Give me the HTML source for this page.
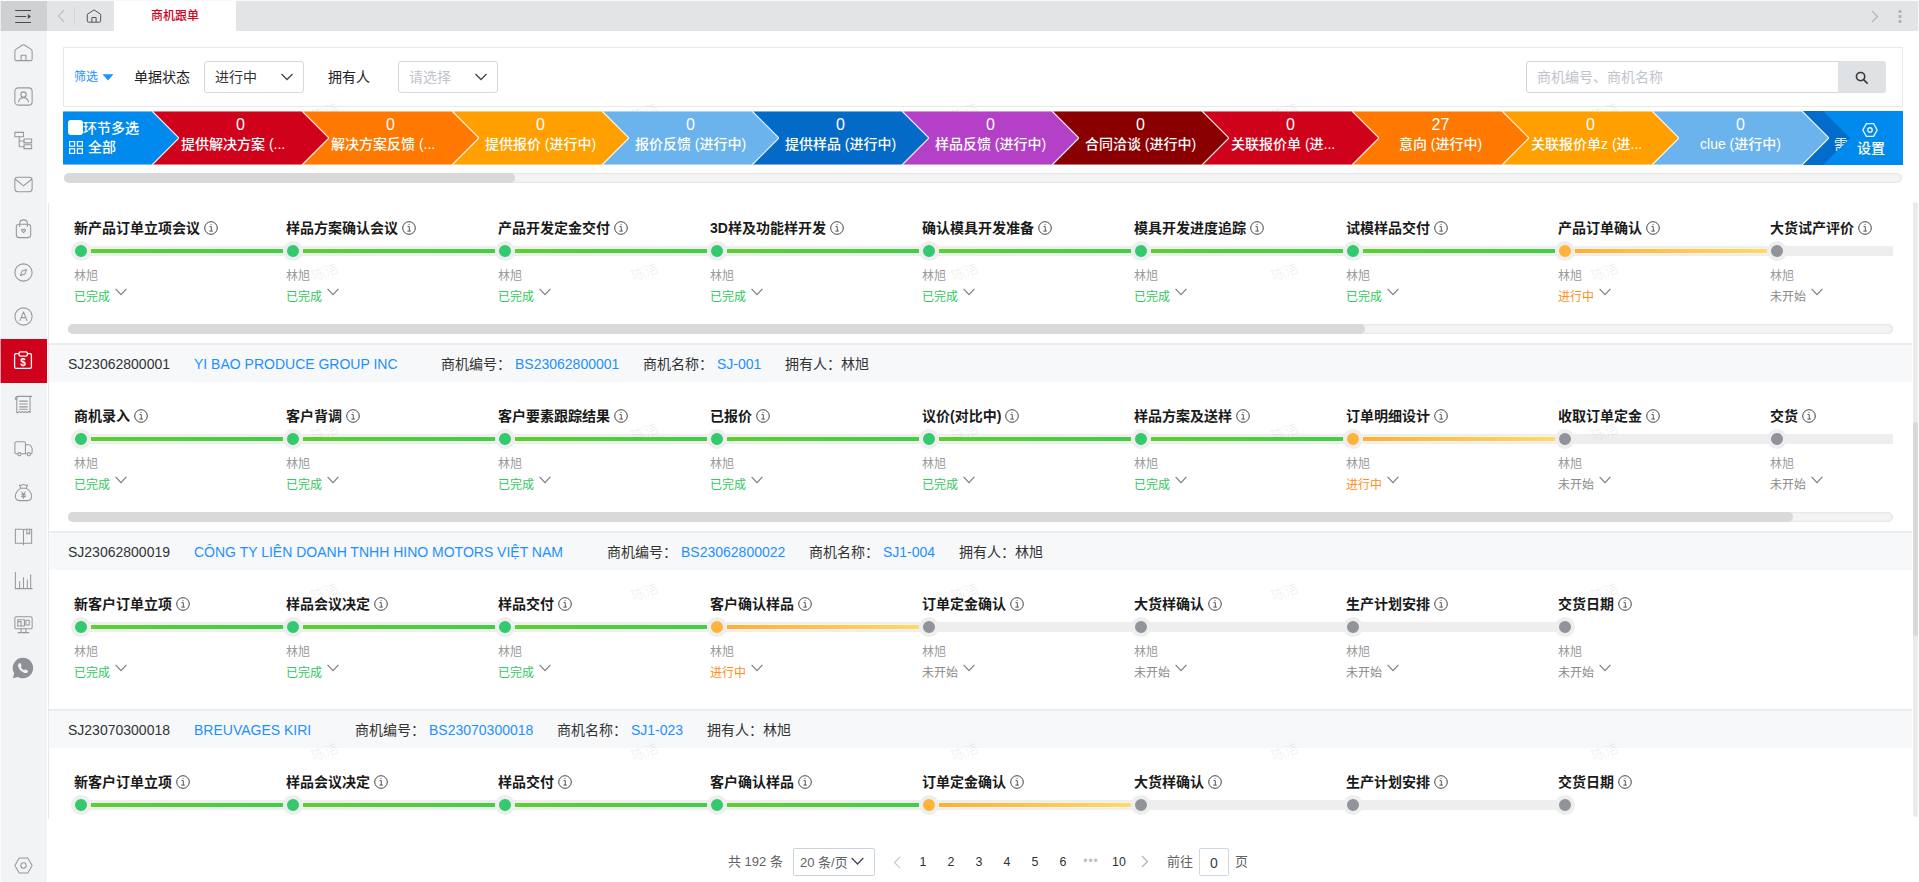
<!DOCTYPE html><html lang="zh-CN"><head><meta charset="utf-8"><title>商机跟单</title><style>
*{box-sizing:border-box;margin:0;padding:0}
html,body{width:1919px;height:882px;overflow:hidden;background:#fff}
body{font-family:"Liberation Sans","Noto Sans CJK SC",sans-serif;font-size:14px;color:#333;position:relative}
.abs{position:absolute}
#topbar{position:absolute;left:0;top:0;width:1919px;height:31px;background:#e3e4e6}
#ham{position:absolute;left:0;top:0;width:47px;height:31px;background:#cfd0d2}
#tab{position:absolute;left:114px;top:1px;width:122px;height:30px;background:#fff;color:#d0021b;font-size:12px;line-height:30px;text-align:center;font-weight:500}
#side{position:absolute;left:0;top:31px;width:47px;height:851px;background:#f2f3f5}
.sic{position:absolute;left:0;width:47px;height:44px}
.sic svg{position:absolute;left:11.500px;top:10.500px;width:23px;height:23px;overflow:visible}
.sic.on{background:#d0021b}
#filter{position:absolute;left:63px;top:47px;width:1840px;height:60px;border:1px solid #e9e9eb;background:#fff}
.sel{position:absolute;height:32px;border:1px solid #d6d8dd;border-radius:3px;background:#fff;font-size:14px;line-height:30px;padding-left:10px;color:#333}
.sel svg{position:absolute;right:9px;top:8px}
#pipe{position:absolute;left:63px;top:111px;width:1840px;height:54px;overflow:hidden;background:#018aed;border-radius:2px 0 0 2px}
.seg{position:absolute;top:0;height:54px;width:177px;color:#fff;text-align:center;font-weight:500}
.seg svg{position:absolute;left:0;top:0}
.seg .n{position:absolute;left:0;width:177px;top:5px;font-size:16px;line-height:18px}
.seg .t{position:absolute;left:0;width:177px;top:23px;font-size:14px;line-height:20px;white-space:nowrap}
.hsb{position:absolute;height:10px;border-radius:5px;background:#f4f4f4;box-shadow:inset 0 0 3px rgba(0,0,0,.12)}
.hsb i{position:absolute;left:0;top:0;height:10px;border-radius:5px;background:#d9d9d9}
#panel{position:absolute;left:49px;top:200px;width:1863px;height:619px;overflow:hidden}
.hdr{position:absolute;left:0;width:1864px;height:39px;border-top:2px solid #ebecef;background:#f7f8fa;font-size:14px;line-height:39px;white-space:nowrap;color:#333}
.hdr span{position:absolute;top:0}
.hdr a{color:#1e90ff;text-decoration:none}
.step{position:absolute;width:212px;height:90px}
.step .lb{position:absolute;left:0;top:0;font-size:14px;font-weight:bold;color:#1a1a1a;line-height:20px;white-space:nowrap}
.step .lb svg{vertical-align:-2px;margin-left:4px}
.step .trk{position:absolute;left:7px;top:28px;width:212px;height:10px;background:#eee}
.step .bar{position:absolute;left:17px;top:31px;width:192px;height:4px;box-shadow:0 0 0 1px rgba(255,250,255,.55)}
.step .dot{position:absolute;left:-3px;top:23px;width:20px;height:20px;border-radius:10px;border:4px solid #eee}
.g .dot{background:#33c96d}.g .bar{background:linear-gradient(90deg,#5ad12c,#3dd142)}
.o .dot{background:#ffb339}.o .bar{background:linear-gradient(90deg,#ffb02e,#ffda62)}
.n .dot{background:#909399}.n .bar{display:none}
.step .nm{position:absolute;left:0;top:50px;font-size:12px;line-height:16px;color:#999}
.step .st{position:absolute;left:0;top:71px;font-size:12px;line-height:16px;white-space:nowrap}
.g .st{color:#33c862}.o .st{color:#ff8e20}.n .st{color:#8a8a8a}
.step .st svg{position:absolute;left:41px;top:-1px}
#pg{position:absolute;left:0;top:848px;width:1919px;height:28px;font-size:13px;color:#606266;line-height:28px}
#pg span{position:absolute;top:0;white-space:nowrap}
#pg .num{color:#303133;width:28px;text-align:center;font-size:13.500px;transform:scaleX(.92)}
.wm{position:absolute;font-size:14px;line-height:20px;color:rgba(0,0,0,.075);transform:rotate(-20deg);white-space:nowrap;pointer-events:none}
</style></head><body>
<div id="topbar"><div id="ham"><svg class="abs" style="left:15px;top:9px" width="17" height="15" viewBox="0 0 17 15" fill="none" stroke="#4a4a4e" stroke-width="1.1"><path d="M0.200 1.500H16M0.200 7.500H11.200M0.200 13.500H16"/><path d="M12.800 5L16 7.500L12.800 10Z" fill="#4a4a4e" stroke="none"/></svg></div>
<svg class="abs" style="left:57px;top:9px" width="8" height="14" viewBox="0 0 8 14" fill="none" stroke="#bfc1c4" stroke-width="1.2"><path d="M7 1L1.5 7L7 13"/></svg>
<div class="abs" style="left:74px;top:7px;width:1px;height:18px;background:#d4d5d7"></div>
<svg class="abs" style="left:86px;top:9px" width="16" height="14" viewBox="0 0 16 14" fill="none" stroke="#55555a" stroke-width="1" stroke-linejoin="round"><path d="M1.300 11.800V5.300L8 .9L14.700 5.300V11.800Q14.700 13.200 13.300 13.200H2.700Q1.300 13.200 1.300 11.800Z"/><path d="M5.900 13V8.500H10.100V13"/></svg>
<div id="tab">商机跟单</div>
<svg class="abs" style="left:1871px;top:10px" width="8" height="13" viewBox="0 0 8 13" fill="none" stroke="#b4b6ba" stroke-width="1.2"><path d="M1 1L6.5 6.5L1 12"/></svg>
<svg class="abs" style="left:1898px;top:10px" width="4" height="14" viewBox="0 0 4 14" fill="#b0b1b5"><rect x=".5" y="0" width="3" height="3" rx="1"/><rect x=".5" y="5" width="3" height="3" rx="1"/><rect x=".5" y="10" width="3" height="3" rx="1"/></svg>
</div>
<div id="side">
<div class="sic" style="top:-1px"><svg viewBox="0 0 24 24" stroke="#96989d" stroke-width="1.1" fill="none" stroke-linecap="round" stroke-linejoin="round"><path d="M3 19V10.600Q3 9.400 4 8.700L11 4.200Q12 3.600 13 4.200L20 8.700Q21 9.400 21 10.600V19Q21 20.500 19.500 20.500H4.500Q3 20.500 3 19Z"/><path d="M9.500 20.300V14.800H14.500V20.300"/></svg></div>
<div class="sic" style="top:43px"><svg viewBox="0 0 24 24" stroke="#96989d" stroke-width="1.1" fill="none" stroke-linecap="round" stroke-linejoin="round"><rect x="3" y="3" width="18" height="18" rx="3.5"/><circle cx="12" cy="10" r="2.8"/><path d="M6.8 17.5Q8 13.2 12 13.2Q16 13.2 17.2 17.5"/></svg></div>
<div class="sic" style="top:87px"><svg viewBox="0 0 24 24" stroke="#96989d" stroke-width="1.1" fill="none" stroke-linecap="round" stroke-linejoin="round"><rect x="3" y="3.5" width="9" height="4.5"/><path d="M7.5 8V18.5H12.5M7.5 12.5H12.5"/><rect x="12.5" y="10.5" width="8" height="4"/><rect x="12.5" y="16.5" width="8" height="4"/></svg></div>
<div class="sic" style="top:131px"><svg viewBox="0 0 24 24" stroke="#96989d" stroke-width="1.1" fill="none" stroke-linecap="round" stroke-linejoin="round"><rect x="3" y="4.5" width="18" height="15" rx="3"/><path d="M3.5 6.5L12 13.5L20.5 6.5"/></svg></div>
<div class="sic" style="top:175px"><svg viewBox="0 0 24 24" stroke="#96989d" stroke-width="1.1" fill="none" stroke-linecap="round" stroke-linejoin="round"><rect x="4.5" y="7.5" width="15" height="14" rx="3"/><path d="M8 10V6.5Q8 3 12 3Q16 3 16 6.5V10"/><path d="M12 16.3L10.2 14.4Q9.6 13.2 10.8 12.9Q11.6 12.8 12 13.6Q12.4 12.8 13.2 12.9Q14.4 13.2 13.8 14.4Z"/></svg></div>
<div class="sic" style="top:219px"><svg viewBox="0 0 24 24" stroke="#96989d" stroke-width="1.1" fill="none" stroke-linecap="round" stroke-linejoin="round"><circle cx="12" cy="12" r="9"/><path d="M15.2 8.8L13.5 13.5L8.8 15.2L10.5 10.5Z"/></svg></div>
<div class="sic" style="top:263px"><svg viewBox="0 0 24 24" stroke="#96989d" stroke-width="1.1" fill="none" stroke-linecap="round" stroke-linejoin="round"><circle cx="12" cy="12" r="9"/><path d="M8.3 16.3L12 7.2L15.7 16.3M9.6 13.2H14.4"/></svg></div>
<div class="abs" style="left:0;top:308px;width:47px;height:44px;background:#d0021b"><svg class="abs" style="left:0;top:0" width="47" height="44" viewBox="0 0 47 44" stroke="#fff" stroke-width="1.3" fill="none"><rect x="14.600" y="14.700" width="16.800" height="14.600" rx="1.400"/><rect x="19" y="12.800" width="8.400" height="4.400" rx="1.600" fill="#d0021b"/><text x="23.100" y="26.600" font-size="10" font-weight="bold" fill="#fff" stroke="none" text-anchor="middle" font-family="Liberation Sans,sans-serif">$</text></svg></div>
<div class="sic" style="top:351px"><svg viewBox="0 0 24 24" stroke="#96989d" stroke-width="1.1" fill="none" stroke-linecap="round" stroke-linejoin="round"><path d="M5 20.5V5.5Q5 3.5 7 3.5H20.5Q18.8 3.5 18.8 5.5V20.5L17.2 19.3L15.6 20.5L14 19.3L12.4 20.5L10.8 19.3L9.2 20.5L7.6 19.3L6 20.5Z"/><path d="M3.5 6.5Q3.5 3.5 7 3.5M3.5 6.5H5M8 8.5H16M8 11.5H16M8 14.5H16M8 17H16"/></svg></div>
<div class="sic" style="top:395px"><svg viewBox="0 0 24 24" stroke="#96989d" stroke-width="1.1" fill="none" stroke-linecap="round" stroke-linejoin="round"><path d="M6 17.5H4.5Q3 17.5 3 16V6.5Q3 5 4.5 5H12.5Q14 5 14 6.5V17.5H9.5"/><path d="M14 8H17.5Q19 8 19.8 9.5L21 12V16Q21 17.5 19.5 17.5H19.3M14 17.5H16"/><circle cx="7.7" cy="18" r="1.7"/><circle cx="17.6" cy="18" r="1.7"/></svg></div>
<div class="sic" style="top:439px"><svg viewBox="0 0 24 24" stroke="#96989d" stroke-width="1.1" fill="none" stroke-linecap="round" stroke-linejoin="round"><path d="M9.2 7.5Q3.5 11.5 3.5 16Q3.5 20.5 8 20.5H16Q20.500 20.5 20.5 16Q20.5 11.5 14.8 7.5Z"/><path d="M9.2 7.5L7.8 4.2Q10 5 12 3.5Q14 5 16.2 4.2L14.8 7.5"/><path d="M10 11.5L12 14L14 11.5M12 14V18M10 14.5H14M10 16.3H14"/></svg></div>
<div class="sic" style="top:483px"><svg viewBox="0 0 24 24" stroke="#96989d" stroke-width="1.1" fill="none" stroke-linecap="round" stroke-linejoin="round"><path d="M12 6Q12 4.5 10.5 4.5H3.5V19H10.5Q12 19 12 20.5Q12 19 13.5 19H20.5V4.5H13.5Q12 4.500 12 6ZM12 6V20"/><path d="M15.5 4.5V9.500L17 8.5L18.500 9.5V4.5"/></svg></div>
<div class="sic" style="top:527px"><svg viewBox="0 0 24 24" stroke="#96989d" stroke-width="1.1" fill="none" stroke-linecap="round" stroke-linejoin="round"><path d="M3.5 3.5V20.5H21M8 20V13M12 20V9M16 20V11.500M19.500 20V6"/></svg></div>
<div class="sic" style="top:571px"><svg viewBox="0 0 24 24" stroke="#96989d" stroke-width="1.1" fill="none" stroke-linecap="round" stroke-linejoin="round"><rect x="3" y="4" width="18" height="12.500" rx="1.5"/><path d="M9.5 16.5V20.5M14.5 16.5V20.5M6.5 20.5H17.5M6 7H13V13.500H6ZM6 9H9.5V13.5M14.500 7.5H18V12.500H14.500Z"/></svg></div>
<div class="sic" style="top:615px"><svg style="left:11px;top:10px;width:24px;height:24px" viewBox="0 0 24 24"><path d="M12 1.800A10.200 10.200 0 0 0 3.200 17.200L1.800 22.200L7 20.900A10.200 10.200 0 1 0 12 1.800Z" fill="#8e9096"/><path d="M8.200 7.200Q9 6.600 9.500 7.400L10.500 9.200Q10.800 9.900 10.200 10.500L9.700 11Q10.800 13.200 13 14.300L13.600 13.700Q14.200 13.200 14.900 13.600L16.600 14.600Q17.300 15.100 16.800 15.900Q15.500 17.600 13.500 16.900Q8.800 15.100 7.100 10.500Q6.600 8.400 8.200 7.200Z" fill="#f2f3f5"/></svg></div>
<div class="sic" style="top:812px"><svg viewBox="0 0 24 24" stroke="#96989d" stroke-width="1.1" fill="none" stroke-linecap="round" stroke-linejoin="round"><path d="M7.500 4.200H16.500L21 12L16.500 19.800H7.500L3 12Z"/><circle cx="12" cy="12" r="2.800"/></svg></div>
</div>
<div id="filter">
<span class="abs" style="left:10px;top:19px;font-size:12px;line-height:20px;color:#1e90ff">筛选</span>
<svg class="abs" style="left:38px;top:26px" width="12" height="7" viewBox="0 0 12 7"><path d="M.5 .3H11.500L6 6.600Z" fill="#1e90ff"/></svg>
<span class="abs" style="left:70px;top:19px;font-size:14px;line-height:20px;color:#222">单据状态</span>
<div class="sel" style="left:140px;top:13px;width:100px">进行中<svg width="14" height="14" viewBox="0 0 14 14" fill="none" stroke="#444" stroke-width="1.3"><path d="M1.500 4L7 9.500L12.500 4"/></svg></div>
<span class="abs" style="left:264px;top:19px;font-size:14px;line-height:20px;color:#222">拥有人</span>
<div class="sel" style="left:334px;top:13px;width:100px;color:#c0c4cc">请选择<svg width="14" height="14" viewBox="0 0 14 14" fill="none" stroke="#444" stroke-width="1.3"><path d="M1.500 4L7 9.500L12.500 4"/></svg></div>
<div class="abs" style="left:1462px;top:13px;width:313px;height:32px;border:1px solid #d3d6da;border-radius:3px 0 0 3px;font-size:14px;line-height:30px;padding-left:10px;color:#c0c4cc">商机编号、商机名称</div>
<div class="abs" style="left:1774px;top:13px;width:48px;height:32px;background:#dfe2e5;border-radius:0 3px 3px 0"><svg class="abs" style="left:17px;top:9.500px" width="13.500" height="13.500" viewBox="0 0 15 15" fill="none" stroke="#3a3a3a" stroke-width="1.800"><circle cx="6.200" cy="6.200" r="4.600"/><path d="M9.600 9.600L13.500 13.500" stroke-linecap="round"/></svg></div>
</div>
<div id="pipe">
<div class="seg" style="left:-61px;text-align:left;z-index:40"><svg width="177" height="54" viewBox="0 0 177 54"><path d="M-30 0H150L177 27L150 54H-30Z" fill="#018aed" stroke="rgba(255,255,255,.9)" stroke-width="1.2"/></svg><div class="abs" style="left:66px;top:9px;width:15px;height:15px;background:#fff;border-radius:3px"></div><span class="abs" style="left:81px;top:7px;font-size:14px;line-height:20px;white-space:nowrap">环节多选</span><svg class="abs" style="left:66.500px;top:29.500px;width:14px;height:13px" width="14" height="13" viewBox="0 0 14 13" fill="none" stroke="#fff" stroke-width="1.200"><rect x=".6" y=".6" width="5" height="4.600"/><rect x="8.400" y=".6" width="5" height="4.600"/><rect x=".6" y="7.800" width="5" height="4.600"/><rect x="8.400" y="7.800" width="5" height="4.600"/></svg><span class="abs" style="left:86px;top:26px;font-size:14px;line-height:20px;white-space:nowrap">全部</span></div>
<div class="seg" style="left:89px;z-index:30"><svg width="177" height="54" viewBox="0 0 177 54"><path d="M-30 0H150L177 27L150 54H-30Z" fill="#d0021b" stroke="rgba(255,255,255,.9)" stroke-width="1.2"/></svg><div class="n">0</div><div class="t" style="text-align:left;left:29px">提供解决方案 (...</div></div>
<div class="seg" style="left:239px;z-index:29"><svg width="177" height="54" viewBox="0 0 177 54"><path d="M-30 0H150L177 27L150 54H-30Z" fill="#ff7800" stroke="rgba(255,255,255,.9)" stroke-width="1.2"/></svg><div class="n">0</div><div class="t" style="text-align:left;left:29px">解决方案反馈 (...</div></div>
<div class="seg" style="left:389px;z-index:28"><svg width="177" height="54" viewBox="0 0 177 54"><path d="M-30 0H150L177 27L150 54H-30Z" fill="#ffa000" stroke="rgba(255,255,255,.9)" stroke-width="1.2"/></svg><div class="n">0</div><div class="t">提供报价 (进行中)</div></div>
<div class="seg" style="left:539px;z-index:27"><svg width="177" height="54" viewBox="0 0 177 54"><path d="M-30 0H150L177 27L150 54H-30Z" fill="#6ab3ec" stroke="rgba(255,255,255,.9)" stroke-width="1.2"/></svg><div class="n">0</div><div class="t">报价反馈 (进行中)</div></div>
<div class="seg" style="left:689px;z-index:26"><svg width="177" height="54" viewBox="0 0 177 54"><path d="M-30 0H150L177 27L150 54H-30Z" fill="#046ac8" stroke="rgba(255,255,255,.9)" stroke-width="1.2"/></svg><div class="n">0</div><div class="t">提供样品 (进行中)</div></div>
<div class="seg" style="left:839px;z-index:25"><svg width="177" height="54" viewBox="0 0 177 54"><path d="M-30 0H150L177 27L150 54H-30Z" fill="#b540c8" stroke="rgba(255,255,255,.9)" stroke-width="1.2"/></svg><div class="n">0</div><div class="t">样品反馈 (进行中)</div></div>
<div class="seg" style="left:989px;z-index:24"><svg width="177" height="54" viewBox="0 0 177 54"><path d="M-30 0H150L177 27L150 54H-30Z" fill="#8a0000" stroke="rgba(255,255,255,.9)" stroke-width="1.2"/></svg><div class="n">0</div><div class="t">合同洽谈 (进行中)</div></div>
<div class="seg" style="left:1139px;z-index:23"><svg width="177" height="54" viewBox="0 0 177 54"><path d="M-30 0H150L177 27L150 54H-30Z" fill="#d0021b" stroke="rgba(255,255,255,.9)" stroke-width="1.2"/></svg><div class="n">0</div><div class="t" style="text-align:left;left:29px">关联报价单 (进...</div></div>
<div class="seg" style="left:1289px;z-index:22"><svg width="177" height="54" viewBox="0 0 177 54"><path d="M-30 0H150L177 27L150 54H-30Z" fill="#ff7800" stroke="rgba(255,255,255,.9)" stroke-width="1.2"/></svg><div class="n">27</div><div class="t">意向 (进行中)</div></div>
<div class="seg" style="left:1439px;z-index:21"><svg width="177" height="54" viewBox="0 0 177 54"><path d="M-30 0H150L177 27L150 54H-30Z" fill="#ffa000" stroke="rgba(255,255,255,.9)" stroke-width="1.2"/></svg><div class="n">0</div><div class="t" style="text-align:left;left:29px">关联报价单z (进...</div></div>
<div class="seg" style="left:1589px;z-index:20"><svg width="177" height="54" viewBox="0 0 177 54"><path d="M-30 0H150L177 27L150 54H-30Z" fill="#6ab3ec" stroke="rgba(255,255,255,.9)" stroke-width="1.2"/></svg><div class="n">0</div><div class="t">clue (进行中)</div></div>
<div class="abs" style="left:1739px;top:0;width:101px;height:54px;background:#018aed"></div>
<svg class="abs" style="left:1739px;top:0" width="48" height="54" viewBox="0 0 48 54"><path d="M0 0H21L48 27L21 54H0Z" fill="#036bc9"/></svg>
<div class="abs" style="left:1771px;top:24px;width:16px;height:16px;overflow:hidden;color:#fff;font-size:14px;line-height:20px;clip-path:polygon(0 0,100% 0,100% 20%,20% 100%,0 100%)">需</div>
<svg class="abs" style="left:1799px;top:11px" width="16" height="16" viewBox="0 0 16 16" fill="none" stroke="#e4f2fd" stroke-width="1.400" stroke-linejoin="round"><path d="M4.400 1.600H11.600L15.200 8L11.600 14.400H4.400L.8 8Z"/><circle cx="8" cy="8" r="2.200"/></svg>
<span class="abs" style="left:1794px;top:27px;font-size:14px;line-height:20px;color:#fff;font-weight:500">设置</span>
</div>
<div class="hsb" style="left:64px;top:173px;width:1838px"><i style="width:451px"></i></div>
<div class="abs" style="left:48px;top:203px;width:1px;height:616px;background:#e8e9ec"></div>
<div id="panel">
<div class="abs" style="left:19px;top:14px;width:1825px;height:100px;overflow:hidden">
<div class="step g" style="left:6px;top:4px"><div class="trk"></div><div class="bar"></div><div class="dot"></div><div class="lb">新产品订单立项会议<svg width="14" height="14" viewBox="0 0 14 14" fill="none" stroke="#444" stroke-width="1"><circle cx="7" cy="7" r="6.300"/><path d="M5.500 5.600H7.300V10M5.300 10.100H8.900" stroke-width=".9"/><circle cx="7" cy="3.500" r=".55" fill="#444" stroke="none"/></svg></div><div class="nm">林旭</div><div class="st">已完成<svg width="12" height="8" viewBox="0 0 12 8" fill="none" stroke="#7c7c86" stroke-width="1.200"><path d="M.6 .8L6 6.600L11.400 .8"/></svg></div></div>
<div class="step g" style="left:218px;top:4px"><div class="trk"></div><div class="bar"></div><div class="dot"></div><div class="lb">样品方案确认会议<svg width="14" height="14" viewBox="0 0 14 14" fill="none" stroke="#444" stroke-width="1"><circle cx="7" cy="7" r="6.300"/><path d="M5.500 5.600H7.300V10M5.300 10.100H8.900" stroke-width=".9"/><circle cx="7" cy="3.500" r=".55" fill="#444" stroke="none"/></svg></div><div class="nm">林旭</div><div class="st">已完成<svg width="12" height="8" viewBox="0 0 12 8" fill="none" stroke="#7c7c86" stroke-width="1.200"><path d="M.6 .8L6 6.600L11.400 .8"/></svg></div></div>
<div class="step g" style="left:430px;top:4px"><div class="trk"></div><div class="bar"></div><div class="dot"></div><div class="lb">产品开发定金交付<svg width="14" height="14" viewBox="0 0 14 14" fill="none" stroke="#444" stroke-width="1"><circle cx="7" cy="7" r="6.300"/><path d="M5.500 5.600H7.300V10M5.300 10.100H8.900" stroke-width=".9"/><circle cx="7" cy="3.500" r=".55" fill="#444" stroke="none"/></svg></div><div class="nm">林旭</div><div class="st">已完成<svg width="12" height="8" viewBox="0 0 12 8" fill="none" stroke="#7c7c86" stroke-width="1.200"><path d="M.6 .8L6 6.600L11.400 .8"/></svg></div></div>
<div class="step g" style="left:642px;top:4px"><div class="trk"></div><div class="bar"></div><div class="dot"></div><div class="lb">3D样及功能样开发<svg width="14" height="14" viewBox="0 0 14 14" fill="none" stroke="#444" stroke-width="1"><circle cx="7" cy="7" r="6.300"/><path d="M5.500 5.600H7.300V10M5.300 10.100H8.900" stroke-width=".9"/><circle cx="7" cy="3.500" r=".55" fill="#444" stroke="none"/></svg></div><div class="nm">林旭</div><div class="st">已完成<svg width="12" height="8" viewBox="0 0 12 8" fill="none" stroke="#7c7c86" stroke-width="1.200"><path d="M.6 .8L6 6.600L11.400 .8"/></svg></div></div>
<div class="step g" style="left:854px;top:4px"><div class="trk"></div><div class="bar"></div><div class="dot"></div><div class="lb">确认模具开发准备<svg width="14" height="14" viewBox="0 0 14 14" fill="none" stroke="#444" stroke-width="1"><circle cx="7" cy="7" r="6.300"/><path d="M5.500 5.600H7.300V10M5.300 10.100H8.900" stroke-width=".9"/><circle cx="7" cy="3.500" r=".55" fill="#444" stroke="none"/></svg></div><div class="nm">林旭</div><div class="st">已完成<svg width="12" height="8" viewBox="0 0 12 8" fill="none" stroke="#7c7c86" stroke-width="1.200"><path d="M.6 .8L6 6.600L11.400 .8"/></svg></div></div>
<div class="step g" style="left:1066px;top:4px"><div class="trk"></div><div class="bar"></div><div class="dot"></div><div class="lb">模具开发进度追踪<svg width="14" height="14" viewBox="0 0 14 14" fill="none" stroke="#444" stroke-width="1"><circle cx="7" cy="7" r="6.300"/><path d="M5.500 5.600H7.300V10M5.300 10.100H8.900" stroke-width=".9"/><circle cx="7" cy="3.500" r=".55" fill="#444" stroke="none"/></svg></div><div class="nm">林旭</div><div class="st">已完成<svg width="12" height="8" viewBox="0 0 12 8" fill="none" stroke="#7c7c86" stroke-width="1.200"><path d="M.6 .8L6 6.600L11.400 .8"/></svg></div></div>
<div class="step g" style="left:1278px;top:4px"><div class="trk"></div><div class="bar"></div><div class="dot"></div><div class="lb">试模样品交付<svg width="14" height="14" viewBox="0 0 14 14" fill="none" stroke="#444" stroke-width="1"><circle cx="7" cy="7" r="6.300"/><path d="M5.500 5.600H7.300V10M5.300 10.100H8.900" stroke-width=".9"/><circle cx="7" cy="3.500" r=".55" fill="#444" stroke="none"/></svg></div><div class="nm">林旭</div><div class="st">已完成<svg width="12" height="8" viewBox="0 0 12 8" fill="none" stroke="#7c7c86" stroke-width="1.200"><path d="M.6 .8L6 6.600L11.400 .8"/></svg></div></div>
<div class="step o" style="left:1490px;top:4px"><div class="trk"></div><div class="bar"></div><div class="dot"></div><div class="lb">产品订单确认<svg width="14" height="14" viewBox="0 0 14 14" fill="none" stroke="#444" stroke-width="1"><circle cx="7" cy="7" r="6.300"/><path d="M5.500 5.600H7.300V10M5.300 10.100H8.900" stroke-width=".9"/><circle cx="7" cy="3.500" r=".55" fill="#444" stroke="none"/></svg></div><div class="nm">林旭</div><div class="st">进行中<svg width="12" height="8" viewBox="0 0 12 8" fill="none" stroke="#7c7c86" stroke-width="1.200"><path d="M.6 .8L6 6.600L11.400 .8"/></svg></div></div>
<div class="step n" style="left:1702px;top:4px"><div class="trk"></div><div class="bar"></div><div class="dot"></div><div class="lb">大货试产评价<svg width="14" height="14" viewBox="0 0 14 14" fill="none" stroke="#444" stroke-width="1"><circle cx="7" cy="7" r="6.300"/><path d="M5.500 5.600H7.300V10M5.300 10.100H8.900" stroke-width=".9"/><circle cx="7" cy="3.500" r=".55" fill="#444" stroke="none"/></svg></div><div class="nm">林旭</div><div class="st">未开始<svg width="12" height="8" viewBox="0 0 12 8" fill="none" stroke="#7c7c86" stroke-width="1.200"><path d="M.6 .8L6 6.600L11.400 .8"/></svg></div></div>
</div>
<div class="hsb" style="left:19px;top:124px;width:1825px"><i style="width:1297px"></i></div>
<div class="hdr" style="top:143px"><span style="left:19px">SJ23062800001</span><span style="left:145px"><a>YI BAO PRODUCE GROUP INC</a></span><span style="left:392px">商机编号：</span><span style="left:466px"><a>BS23062800001</a></span><span style="left:594px">商机名称：</span><span style="left:668px"><a>SJ-001</a></span><span style="left:736px">拥有人：林旭</span></div>
<div class="abs" style="left:19px;top:202px;width:1825px;height:100px;overflow:hidden">
<div class="step g" style="left:6px;top:4px"><div class="trk"></div><div class="bar"></div><div class="dot"></div><div class="lb">商机录入<svg width="14" height="14" viewBox="0 0 14 14" fill="none" stroke="#444" stroke-width="1"><circle cx="7" cy="7" r="6.300"/><path d="M5.500 5.600H7.300V10M5.300 10.100H8.900" stroke-width=".9"/><circle cx="7" cy="3.500" r=".55" fill="#444" stroke="none"/></svg></div><div class="nm">林旭</div><div class="st">已完成<svg width="12" height="8" viewBox="0 0 12 8" fill="none" stroke="#7c7c86" stroke-width="1.200"><path d="M.6 .8L6 6.600L11.400 .8"/></svg></div></div>
<div class="step g" style="left:218px;top:4px"><div class="trk"></div><div class="bar"></div><div class="dot"></div><div class="lb">客户背调<svg width="14" height="14" viewBox="0 0 14 14" fill="none" stroke="#444" stroke-width="1"><circle cx="7" cy="7" r="6.300"/><path d="M5.500 5.600H7.300V10M5.300 10.100H8.900" stroke-width=".9"/><circle cx="7" cy="3.500" r=".55" fill="#444" stroke="none"/></svg></div><div class="nm">林旭</div><div class="st">已完成<svg width="12" height="8" viewBox="0 0 12 8" fill="none" stroke="#7c7c86" stroke-width="1.200"><path d="M.6 .8L6 6.600L11.400 .8"/></svg></div></div>
<div class="step g" style="left:430px;top:4px"><div class="trk"></div><div class="bar"></div><div class="dot"></div><div class="lb">客户要素跟踪结果<svg width="14" height="14" viewBox="0 0 14 14" fill="none" stroke="#444" stroke-width="1"><circle cx="7" cy="7" r="6.300"/><path d="M5.500 5.600H7.300V10M5.300 10.100H8.900" stroke-width=".9"/><circle cx="7" cy="3.500" r=".55" fill="#444" stroke="none"/></svg></div><div class="nm">林旭</div><div class="st">已完成<svg width="12" height="8" viewBox="0 0 12 8" fill="none" stroke="#7c7c86" stroke-width="1.200"><path d="M.6 .8L6 6.600L11.400 .8"/></svg></div></div>
<div class="step g" style="left:642px;top:4px"><div class="trk"></div><div class="bar"></div><div class="dot"></div><div class="lb">已报价<svg width="14" height="14" viewBox="0 0 14 14" fill="none" stroke="#444" stroke-width="1"><circle cx="7" cy="7" r="6.300"/><path d="M5.500 5.600H7.300V10M5.300 10.100H8.900" stroke-width=".9"/><circle cx="7" cy="3.500" r=".55" fill="#444" stroke="none"/></svg></div><div class="nm">林旭</div><div class="st">已完成<svg width="12" height="8" viewBox="0 0 12 8" fill="none" stroke="#7c7c86" stroke-width="1.200"><path d="M.6 .8L6 6.600L11.400 .8"/></svg></div></div>
<div class="step g" style="left:854px;top:4px"><div class="trk"></div><div class="bar"></div><div class="dot"></div><div class="lb">议价(对比中)<svg width="14" height="14" viewBox="0 0 14 14" fill="none" stroke="#444" stroke-width="1"><circle cx="7" cy="7" r="6.300"/><path d="M5.500 5.600H7.300V10M5.300 10.100H8.900" stroke-width=".9"/><circle cx="7" cy="3.500" r=".55" fill="#444" stroke="none"/></svg></div><div class="nm">林旭</div><div class="st">已完成<svg width="12" height="8" viewBox="0 0 12 8" fill="none" stroke="#7c7c86" stroke-width="1.200"><path d="M.6 .8L6 6.600L11.400 .8"/></svg></div></div>
<div class="step g" style="left:1066px;top:4px"><div class="trk"></div><div class="bar"></div><div class="dot"></div><div class="lb">样品方案及送样<svg width="14" height="14" viewBox="0 0 14 14" fill="none" stroke="#444" stroke-width="1"><circle cx="7" cy="7" r="6.300"/><path d="M5.500 5.600H7.300V10M5.300 10.100H8.900" stroke-width=".9"/><circle cx="7" cy="3.500" r=".55" fill="#444" stroke="none"/></svg></div><div class="nm">林旭</div><div class="st">已完成<svg width="12" height="8" viewBox="0 0 12 8" fill="none" stroke="#7c7c86" stroke-width="1.200"><path d="M.6 .8L6 6.600L11.400 .8"/></svg></div></div>
<div class="step o" style="left:1278px;top:4px"><div class="trk"></div><div class="bar"></div><div class="dot"></div><div class="lb">订单明细设计<svg width="14" height="14" viewBox="0 0 14 14" fill="none" stroke="#444" stroke-width="1"><circle cx="7" cy="7" r="6.300"/><path d="M5.500 5.600H7.300V10M5.300 10.100H8.900" stroke-width=".9"/><circle cx="7" cy="3.500" r=".55" fill="#444" stroke="none"/></svg></div><div class="nm">林旭</div><div class="st">进行中<svg width="12" height="8" viewBox="0 0 12 8" fill="none" stroke="#7c7c86" stroke-width="1.200"><path d="M.6 .8L6 6.600L11.400 .8"/></svg></div></div>
<div class="step n" style="left:1490px;top:4px"><div class="trk"></div><div class="bar"></div><div class="dot"></div><div class="lb">收取订单定金<svg width="14" height="14" viewBox="0 0 14 14" fill="none" stroke="#444" stroke-width="1"><circle cx="7" cy="7" r="6.300"/><path d="M5.500 5.600H7.300V10M5.300 10.100H8.900" stroke-width=".9"/><circle cx="7" cy="3.500" r=".55" fill="#444" stroke="none"/></svg></div><div class="nm">林旭</div><div class="st">未开始<svg width="12" height="8" viewBox="0 0 12 8" fill="none" stroke="#7c7c86" stroke-width="1.200"><path d="M.6 .8L6 6.600L11.400 .8"/></svg></div></div>
<div class="step n" style="left:1702px;top:4px"><div class="trk"></div><div class="bar"></div><div class="dot"></div><div class="lb">交货<svg width="14" height="14" viewBox="0 0 14 14" fill="none" stroke="#444" stroke-width="1"><circle cx="7" cy="7" r="6.300"/><path d="M5.500 5.600H7.300V10M5.300 10.100H8.900" stroke-width=".9"/><circle cx="7" cy="3.500" r=".55" fill="#444" stroke="none"/></svg></div><div class="nm">林旭</div><div class="st">未开始<svg width="12" height="8" viewBox="0 0 12 8" fill="none" stroke="#7c7c86" stroke-width="1.200"><path d="M.6 .8L6 6.600L11.400 .8"/></svg></div></div>
</div>
<div class="hsb" style="left:19px;top:312px;width:1825px"><i style="width:1725px"></i></div>
<div class="hdr" style="top:331px"><span style="left:19px">SJ23062800019</span><span style="left:145px"><a>CÔNG TY LIÊN DOANH TNHH HINO MOTORS VIỆT NAM</a></span><span style="left:558px">商机编号：</span><span style="left:632px"><a>BS23062800022</a></span><span style="left:760px">商机名称：</span><span style="left:834px"><a>SJ1-004</a></span><span style="left:910px">拥有人：林旭</span></div>
<div class="abs" style="left:19px;top:390px;width:1825px;height:100px;overflow:hidden">
<div class="step g" style="left:6px;top:4px"><div class="trk"></div><div class="bar"></div><div class="dot"></div><div class="lb">新客户订单立项<svg width="14" height="14" viewBox="0 0 14 14" fill="none" stroke="#444" stroke-width="1"><circle cx="7" cy="7" r="6.300"/><path d="M5.500 5.600H7.300V10M5.300 10.100H8.900" stroke-width=".9"/><circle cx="7" cy="3.500" r=".55" fill="#444" stroke="none"/></svg></div><div class="nm">林旭</div><div class="st">已完成<svg width="12" height="8" viewBox="0 0 12 8" fill="none" stroke="#7c7c86" stroke-width="1.200"><path d="M.6 .8L6 6.600L11.400 .8"/></svg></div></div>
<div class="step g" style="left:218px;top:4px"><div class="trk"></div><div class="bar"></div><div class="dot"></div><div class="lb">样品会议决定<svg width="14" height="14" viewBox="0 0 14 14" fill="none" stroke="#444" stroke-width="1"><circle cx="7" cy="7" r="6.300"/><path d="M5.500 5.600H7.300V10M5.300 10.100H8.900" stroke-width=".9"/><circle cx="7" cy="3.500" r=".55" fill="#444" stroke="none"/></svg></div><div class="nm">林旭</div><div class="st">已完成<svg width="12" height="8" viewBox="0 0 12 8" fill="none" stroke="#7c7c86" stroke-width="1.200"><path d="M.6 .8L6 6.600L11.400 .8"/></svg></div></div>
<div class="step g" style="left:430px;top:4px"><div class="trk"></div><div class="bar"></div><div class="dot"></div><div class="lb">样品交付<svg width="14" height="14" viewBox="0 0 14 14" fill="none" stroke="#444" stroke-width="1"><circle cx="7" cy="7" r="6.300"/><path d="M5.500 5.600H7.300V10M5.300 10.100H8.900" stroke-width=".9"/><circle cx="7" cy="3.500" r=".55" fill="#444" stroke="none"/></svg></div><div class="nm">林旭</div><div class="st">已完成<svg width="12" height="8" viewBox="0 0 12 8" fill="none" stroke="#7c7c86" stroke-width="1.200"><path d="M.6 .8L6 6.600L11.400 .8"/></svg></div></div>
<div class="step o" style="left:642px;top:4px"><div class="trk"></div><div class="bar"></div><div class="dot"></div><div class="lb">客户确认样品<svg width="14" height="14" viewBox="0 0 14 14" fill="none" stroke="#444" stroke-width="1"><circle cx="7" cy="7" r="6.300"/><path d="M5.500 5.600H7.300V10M5.300 10.100H8.900" stroke-width=".9"/><circle cx="7" cy="3.500" r=".55" fill="#444" stroke="none"/></svg></div><div class="nm">林旭</div><div class="st">进行中<svg width="12" height="8" viewBox="0 0 12 8" fill="none" stroke="#7c7c86" stroke-width="1.200"><path d="M.6 .8L6 6.600L11.400 .8"/></svg></div></div>
<div class="step n" style="left:854px;top:4px"><div class="trk"></div><div class="bar"></div><div class="dot"></div><div class="lb">订单定金确认<svg width="14" height="14" viewBox="0 0 14 14" fill="none" stroke="#444" stroke-width="1"><circle cx="7" cy="7" r="6.300"/><path d="M5.500 5.600H7.300V10M5.300 10.100H8.900" stroke-width=".9"/><circle cx="7" cy="3.500" r=".55" fill="#444" stroke="none"/></svg></div><div class="nm">林旭</div><div class="st">未开始<svg width="12" height="8" viewBox="0 0 12 8" fill="none" stroke="#7c7c86" stroke-width="1.200"><path d="M.6 .8L6 6.600L11.400 .8"/></svg></div></div>
<div class="step n" style="left:1066px;top:4px"><div class="trk"></div><div class="bar"></div><div class="dot"></div><div class="lb">大货样确认<svg width="14" height="14" viewBox="0 0 14 14" fill="none" stroke="#444" stroke-width="1"><circle cx="7" cy="7" r="6.300"/><path d="M5.500 5.600H7.300V10M5.300 10.100H8.900" stroke-width=".9"/><circle cx="7" cy="3.500" r=".55" fill="#444" stroke="none"/></svg></div><div class="nm">林旭</div><div class="st">未开始<svg width="12" height="8" viewBox="0 0 12 8" fill="none" stroke="#7c7c86" stroke-width="1.200"><path d="M.6 .8L6 6.600L11.400 .8"/></svg></div></div>
<div class="step n" style="left:1278px;top:4px"><div class="trk"></div><div class="bar"></div><div class="dot"></div><div class="lb">生产计划安排<svg width="14" height="14" viewBox="0 0 14 14" fill="none" stroke="#444" stroke-width="1"><circle cx="7" cy="7" r="6.300"/><path d="M5.500 5.600H7.300V10M5.300 10.100H8.900" stroke-width=".9"/><circle cx="7" cy="3.500" r=".55" fill="#444" stroke="none"/></svg></div><div class="nm">林旭</div><div class="st">未开始<svg width="12" height="8" viewBox="0 0 12 8" fill="none" stroke="#7c7c86" stroke-width="1.200"><path d="M.6 .8L6 6.600L11.400 .8"/></svg></div></div>
<div class="step n" style="left:1490px;top:4px"><div class="dot"></div><div class="lb">交货日期<svg width="14" height="14" viewBox="0 0 14 14" fill="none" stroke="#444" stroke-width="1"><circle cx="7" cy="7" r="6.300"/><path d="M5.500 5.600H7.300V10M5.300 10.100H8.900" stroke-width=".9"/><circle cx="7" cy="3.500" r=".55" fill="#444" stroke="none"/></svg></div><div class="nm">林旭</div><div class="st">未开始<svg width="12" height="8" viewBox="0 0 12 8" fill="none" stroke="#7c7c86" stroke-width="1.200"><path d="M.6 .8L6 6.600L11.400 .8"/></svg></div></div>
</div>
<div class="hdr" style="top:509px"><span style="left:19px">SJ23070300018</span><span style="left:145px"><a>BREUVAGES KIRI</a></span><span style="left:306px">商机编号：</span><span style="left:380px"><a>BS23070300018</a></span><span style="left:508px">商机名称：</span><span style="left:582px"><a>SJ1-023</a></span><span style="left:658px">拥有人：林旭</span></div>
<div class="abs" style="left:19px;top:568px;width:1825px;height:100px;overflow:hidden">
<div class="step g" style="left:6px;top:4px"><div class="trk"></div><div class="bar"></div><div class="dot"></div><div class="lb">新客户订单立项<svg width="14" height="14" viewBox="0 0 14 14" fill="none" stroke="#444" stroke-width="1"><circle cx="7" cy="7" r="6.300"/><path d="M5.500 5.600H7.300V10M5.300 10.100H8.900" stroke-width=".9"/><circle cx="7" cy="3.500" r=".55" fill="#444" stroke="none"/></svg></div><div class="nm">林旭</div><div class="st">已完成<svg width="12" height="8" viewBox="0 0 12 8" fill="none" stroke="#7c7c86" stroke-width="1.200"><path d="M.6 .8L6 6.600L11.400 .8"/></svg></div></div>
<div class="step g" style="left:218px;top:4px"><div class="trk"></div><div class="bar"></div><div class="dot"></div><div class="lb">样品会议决定<svg width="14" height="14" viewBox="0 0 14 14" fill="none" stroke="#444" stroke-width="1"><circle cx="7" cy="7" r="6.300"/><path d="M5.500 5.600H7.300V10M5.300 10.100H8.900" stroke-width=".9"/><circle cx="7" cy="3.500" r=".55" fill="#444" stroke="none"/></svg></div><div class="nm">林旭</div><div class="st">已完成<svg width="12" height="8" viewBox="0 0 12 8" fill="none" stroke="#7c7c86" stroke-width="1.200"><path d="M.6 .8L6 6.600L11.400 .8"/></svg></div></div>
<div class="step g" style="left:430px;top:4px"><div class="trk"></div><div class="bar"></div><div class="dot"></div><div class="lb">样品交付<svg width="14" height="14" viewBox="0 0 14 14" fill="none" stroke="#444" stroke-width="1"><circle cx="7" cy="7" r="6.300"/><path d="M5.500 5.600H7.300V10M5.300 10.100H8.900" stroke-width=".9"/><circle cx="7" cy="3.500" r=".55" fill="#444" stroke="none"/></svg></div><div class="nm">林旭</div><div class="st">已完成<svg width="12" height="8" viewBox="0 0 12 8" fill="none" stroke="#7c7c86" stroke-width="1.200"><path d="M.6 .8L6 6.600L11.400 .8"/></svg></div></div>
<div class="step g" style="left:642px;top:4px"><div class="trk"></div><div class="bar"></div><div class="dot"></div><div class="lb">客户确认样品<svg width="14" height="14" viewBox="0 0 14 14" fill="none" stroke="#444" stroke-width="1"><circle cx="7" cy="7" r="6.300"/><path d="M5.500 5.600H7.300V10M5.300 10.100H8.900" stroke-width=".9"/><circle cx="7" cy="3.500" r=".55" fill="#444" stroke="none"/></svg></div><div class="nm">林旭</div><div class="st">已完成<svg width="12" height="8" viewBox="0 0 12 8" fill="none" stroke="#7c7c86" stroke-width="1.200"><path d="M.6 .8L6 6.600L11.400 .8"/></svg></div></div>
<div class="step o" style="left:854px;top:4px"><div class="trk"></div><div class="bar"></div><div class="dot"></div><div class="lb">订单定金确认<svg width="14" height="14" viewBox="0 0 14 14" fill="none" stroke="#444" stroke-width="1"><circle cx="7" cy="7" r="6.300"/><path d="M5.500 5.600H7.300V10M5.300 10.100H8.900" stroke-width=".9"/><circle cx="7" cy="3.500" r=".55" fill="#444" stroke="none"/></svg></div><div class="nm">林旭</div><div class="st">进行中<svg width="12" height="8" viewBox="0 0 12 8" fill="none" stroke="#7c7c86" stroke-width="1.200"><path d="M.6 .8L6 6.600L11.400 .8"/></svg></div></div>
<div class="step n" style="left:1066px;top:4px"><div class="trk"></div><div class="bar"></div><div class="dot"></div><div class="lb">大货样确认<svg width="14" height="14" viewBox="0 0 14 14" fill="none" stroke="#444" stroke-width="1"><circle cx="7" cy="7" r="6.300"/><path d="M5.500 5.600H7.300V10M5.300 10.100H8.900" stroke-width=".9"/><circle cx="7" cy="3.500" r=".55" fill="#444" stroke="none"/></svg></div><div class="nm">林旭</div><div class="st">未开始<svg width="12" height="8" viewBox="0 0 12 8" fill="none" stroke="#7c7c86" stroke-width="1.200"><path d="M.6 .8L6 6.600L11.400 .8"/></svg></div></div>
<div class="step n" style="left:1278px;top:4px"><div class="trk"></div><div class="bar"></div><div class="dot"></div><div class="lb">生产计划安排<svg width="14" height="14" viewBox="0 0 14 14" fill="none" stroke="#444" stroke-width="1"><circle cx="7" cy="7" r="6.300"/><path d="M5.500 5.600H7.300V10M5.300 10.100H8.900" stroke-width=".9"/><circle cx="7" cy="3.500" r=".55" fill="#444" stroke="none"/></svg></div><div class="nm">林旭</div><div class="st">未开始<svg width="12" height="8" viewBox="0 0 12 8" fill="none" stroke="#7c7c86" stroke-width="1.200"><path d="M.6 .8L6 6.600L11.400 .8"/></svg></div></div>
<div class="step n" style="left:1490px;top:4px"><div class="dot"></div><div class="lb">交货日期<svg width="14" height="14" viewBox="0 0 14 14" fill="none" stroke="#444" stroke-width="1"><circle cx="7" cy="7" r="6.300"/><path d="M5.500 5.600H7.300V10M5.300 10.100H8.900" stroke-width=".9"/><circle cx="7" cy="3.500" r=".55" fill="#444" stroke="none"/></svg></div><div class="nm">林旭</div><div class="st">未开始<svg width="12" height="8" viewBox="0 0 12 8" fill="none" stroke="#7c7c86" stroke-width="1.200"><path d="M.6 .8L6 6.600L11.400 .8"/></svg></div></div>
</div>
</div>
<div class="abs" style="left:1913px;top:202px;width:5px;height:615px;background:#ebebeb;border-radius:3px"></div><div class="abs" style="left:1913px;top:422px;width:5px;height:214px;background:#d8d8d8;border-radius:3px"></div>
<div id="pg"><span style="left:728px">共 192 条</span>
<div class="abs" style="left:793px;top:0;width:82px;height:28px;border:1px solid #c8d3e3;border-radius:2px"></div><span style="left:800px;top:1px">20 条/页</span><svg class="abs" style="left:851px;top:9px" width="13" height="9" viewBox="0 0 13 9" fill="none" stroke="#444" stroke-width="1.300"><path d="M.7 1L6.500 7L12.300 1"/></svg>
<svg class="abs" style="left:893px;top:8px" width="8" height="13" viewBox="0 0 8 13" fill="none" stroke="#c8cad0" stroke-width="1.200"><path d="M7 1L1.500 6.500L7 12"/></svg>
<span class="num" style="left:909px">1</span>
<span class="num" style="left:937px">2</span>
<span class="num" style="left:965px">3</span>
<span class="num" style="left:993px">4</span>
<span class="num" style="left:1021px">5</span>
<span class="num" style="left:1049px">6</span>
<span class="num" style="left:1077px;top:-1px;color:#bcc0cc;letter-spacing:1px;font-size:12px;transform:none">•••</span>
<span class="num" style="left:1105px">10</span>
<svg class="abs" style="left:1141px;top:7px" width="8" height="13" viewBox="0 0 8 13" fill="none" stroke="#adb1be" stroke-width="1.200"><path d="M1 1L6.500 6.500L1 12"/></svg>
<span style="left:1167px">前往</span><div class="abs" style="left:1199px;top:0;width:30px;height:28px;border:1px solid #d3d8e0;border-radius:2px;text-align:center;color:#3c3e44;font-size:14px">0</div><span style="left:1235px">页</span></div>
<div class="wm" style="left:311px;top:102px">陈洁</div>
<div class="wm" style="left:631px;top:102px">陈洁</div>
<div class="wm" style="left:951px;top:102px">陈洁</div>
<div class="wm" style="left:1271px;top:102px">陈洁</div>
<div class="wm" style="left:1591px;top:102px">陈洁</div>
<div class="wm" style="left:311px;top:262px">陈洁</div>
<div class="wm" style="left:631px;top:262px">陈洁</div>
<div class="wm" style="left:951px;top:262px">陈洁</div>
<div class="wm" style="left:1271px;top:262px">陈洁</div>
<div class="wm" style="left:1591px;top:262px">陈洁</div>
<div class="wm" style="left:311px;top:422px">陈洁</div>
<div class="wm" style="left:631px;top:422px">陈洁</div>
<div class="wm" style="left:951px;top:422px">陈洁</div>
<div class="wm" style="left:1271px;top:422px">陈洁</div>
<div class="wm" style="left:1591px;top:422px">陈洁</div>
<div class="wm" style="left:311px;top:582px">陈洁</div>
<div class="wm" style="left:631px;top:582px">陈洁</div>
<div class="wm" style="left:951px;top:582px">陈洁</div>
<div class="wm" style="left:1271px;top:582px">陈洁</div>
<div class="wm" style="left:1591px;top:582px">陈洁</div>
<div class="wm" style="left:311px;top:742px">陈洁</div>
<div class="wm" style="left:631px;top:742px">陈洁</div>
<div class="wm" style="left:951px;top:742px">陈洁</div>
<div class="wm" style="left:1271px;top:742px">陈洁</div>
<div class="wm" style="left:1591px;top:742px">陈洁</div>
<div class="abs" style="left:0;top:0;width:1919px;height:1px;background:#fafafa"></div><div class="abs" style="left:0;top:0;width:1px;height:882px;background:rgba(255,255,255,.6)"></div><div class="abs" style="left:1918px;top:0;width:1px;height:32px;background:rgba(255,255,255,.7)"></div>
</body></html>
